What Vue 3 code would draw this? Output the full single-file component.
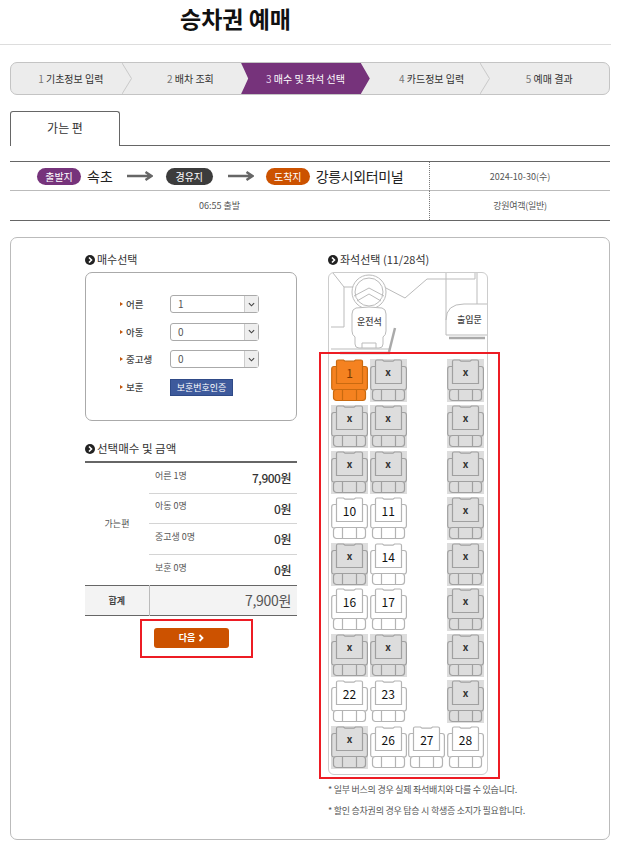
<script setup>
const steps = [
  { no: 1, label: '기초정보 입력' },
  { no: 2, label: '배차 조회' },
  { no: 3, label: '매수 및 좌석 선택', active: true },
  { no: 4, label: '카드정보 입력' },
  { no: 5, label: '예매 결과' }
]

const counts = [
  { label: '어른', value: 1 },
  { label: '아동', value: 0 },
  { label: '중고생', value: 0 }
]

const fares = [
  { label: '어른 1명', price: '7,900원' },
  { label: '아동 0명', price: '0원' },
  { label: '중고생 0명', price: '0원' },
  { label: '보훈 0명', price: '0원' }
]

// null = aisle, 'x' = taken, number = free seat
const seatRows = [
  [1, 'x', null, 'x'],
  ['x', 'x', null, 'x'],
  ['x', 'x', null, 'x'],
  [10, 11, null, 'x'],
  ['x', 14, null, 'x'],
  [16, 17, null, 'x'],
  ['x', 'x', null, 'x'],
  [22, 23, null, 'x'],
  ['x', 26, 27, 28]
]
const seats = seatRows.flat()

function seatClass(seat) {
  if (seat === 'x') return 'taken'
  if (seat === 1) return 'picked'
  return 'free'
}
</script>

<template>
  <div class="page">
    <h1 class="title">승차권 예매</h1>

    <div class="content">
      <ol class="steps">
        <li v-for="s in steps" :key="s.no" class="step" :class="{ active: s.active }">
          <span><em>{{ s.no }}</em> {{ s.label }}</span>
          <svg v-if="!s.active && s.no < 5" class="step-sep" viewBox="0 0 10 33" preserveAspectRatio="none">
            <path d="M0 0L9.5 16.5L0 33" fill="#ececec" stroke="#c8c8c8" />
          </svg>
        </li>
      </ol>

      <div class="tabs">
        <div class="tab">가는 편</div>
      </div>

      <div class="route">
        <div class="route-main">
          <span class="pill purple">출발지</span>
          <span class="place first">속초</span>
          <svg class="arrow" viewBox="0 0 26 10"><path d="M0 5H24M18.5 1L24.5 5L18.5 9" fill="none" stroke="#666" stroke-width="2.4" /></svg>
          <span class="pill dark">경유지</span>
          <svg class="arrow second" viewBox="0 0 26 10"><path d="M0 5H24M18.5 1L24.5 5L18.5 9" fill="none" stroke="#666" stroke-width="2.4" /></svg>
          <span class="pill orange">도착지</span>
          <span class="place">강릉시외터미널</span>
        </div>
        <div class="route-side">2024-10-30(수)</div>
        <div class="route-time">06:55 출발</div>
        <div class="route-side last">강원여객(일반)</div>
      </div>

      <div class="panel">
        <section class="left">
          <h2 class="heading small">
            <i class="bullet"><svg viewBox="0 0 10 10"><path d="M4 2.5L6.5 5L4 7.5" fill="none" stroke="#fff" stroke-width="1.6" /></svg></i>매수선택
          </h2>
          <div class="count-box">
            <div v-for="c in counts" :key="c.label" class="count-row">
              <span class="count-label">{{ c.label }}</span>
              <div class="select">
                <span class="select-value">{{ c.value }}</span>
                <span class="select-arrow"><svg viewBox="0 0 8 5"><path d="M1 1L4 4L7 1" fill="none" stroke="#444" stroke-width="1.3" /></svg></span>
              </div>
            </div>
            <div class="count-row">
              <span class="count-label">보훈</span>
              <button class="verify">보훈번호인증</button>
            </div>
          </div>

          <h2 class="heading fare-heading">
            <i class="bullet"><svg viewBox="0 0 10 10"><path d="M4 2.5L6.5 5L4 7.5" fill="none" stroke="#fff" stroke-width="1.6" /></svg></i>선택매수 및 금액
          </h2>
          <table class="fares">
            <tbody>
              <tr v-for="(f, i) in fares" :key="f.label">
                <th v-if="i === 0" rowspan="4" class="fare-way">가는편</th>
                <td class="fare-label">{{ f.label }}</td>
                <td class="fare-price">{{ f.price }}</td>
              </tr>
              <tr class="total">
                <th>합계</th>
                <td colspan="2">7,900원</td>
              </tr>
            </tbody>
          </table>
          <div class="next-box">
            <button class="next">다음 <svg viewBox="0 0 6 8"><path d="M1.5 1L4.5 4L1.5 7" fill="none" stroke="#fff" stroke-width="1.8" /></svg></button>
          </div>
        </section>

        <section class="right">
          <h2 class="heading small">
            <i class="bullet"><svg viewBox="0 0 10 10"><path d="M4 2.5L6.5 5L4 7.5" fill="none" stroke="#fff" stroke-width="1.6" /></svg></i>좌석선택 (11/28석)
          </h2>
          <div class="bus">
            <div class="cabin">
              <svg class="cabin-art" viewBox="0 0 158 86" fill="none" stroke="#bbb">
                <path d="M4 0L15 14V54H2" />
                <path d="M15 14H55L76 25L98 6H146V0" />
                <circle cx="40" cy="19" r="17" fill="#fff" />
                <circle cx="40" cy="19" r="14" />
                <path d="M25 23L40 15L55 23M28 28L40 21L52 28" />
                <path d="M27 35Q40 33 53 35Q57 36 57 41V58Q57 62 54 64V71Q54 75 50 75H30Q26 75 26 71V64Q23 62 23 58V41Q23 36 27 35Z" fill="#fff" />
                <path d="M33 75V70H47V75" />
                <path d="M2 76H60" />
                <path d="M66 55L60 79" stroke="#aaa" stroke-width="2.5" />
                <path d="M11 80H61" stroke="#aaa" stroke-width="2.5" />
                <path d="M117 0V62H158" />
                <path d="M148 0V31" />
                <path d="M117 47Q117 31 135 31H158" />
                <path d="M120 65H156" stroke="#aaa" stroke-width="2.5" />
              </svg>
              <span class="driver">운전석</span>
              <span class="door">출입문</span>
            </div>
            <div class="seats">
              <template v-for="(seat, i) in seats" :key="i">
                <div v-if="seat === null" class="aisle"></div>
                <div v-else class="seat" :class="seatClass(seat)">
                  <svg viewBox="0 0 37 43">
                    <path class="frame" d="M3 7.5H34Q36.4 7.5 36.4 10V28.5Q36.4 31 34 31H3Q.7 31 .7 28.5V10Q.7 7.5 3 7.5Z" />
                    <path class="frame" d="M5.5 24.5V2.5Q5.5 1 7 1H12.5L14 2.2H23L24.5 1H30Q31.5 1 31.5 2.5V24.5Z" />
                    <rect class="frame" x="2.5" y="30.5" width="32" height="11" rx="3" />
                    <path class="frame" d="M11.5 30.5V41.5M25.5 30.5V41.5" />
                  </svg>
                  <span class="seat-no">{{ seat }}</span>
                </div>
              </template>
            </div>
            <div class="seat-mark"></div>
          </div>
          <p class="note first-note">* 일부 버스의 경우 실제 좌석배치와 다를 수 있습니다.</p>
          <p class="note">* 할인 승차권의 경우 탑승 시 학생증 소지가 필요합니다.</p>
        </section>
      </div>
    </div>
  </div>
</template>

<style>
body {
  background: #fff;
}
</style>

<style scoped>
.page {
  width: 617px;
  height: 847px;
  overflow: hidden;
  font-family: "Noto Sans CJK KR", "Noto Sans", sans-serif;
  color: #333;
  box-sizing: border-box;
}

.title {
  margin: 0;
  width: 611px;
  height: 45px;
  box-sizing: border-box;
  border-bottom: 1px solid #ddd;
  padding: 2px 0 0 180px;
  font-size: 23px;
  line-height: 32px;
  font-weight: 700;
  color: #111;
}

.content {
  padding: 17px 7px 0 10px;
}

.steps {
  display: grid;
  grid-template-columns: repeat(5, 1fr);
  list-style: none;
  margin: 0;
  padding: 0;
  height: 33px;
  box-sizing: border-box;
  background: #ececec;
  border: 1px solid #c4c4c4;
  border-radius: 7px;
  font-size: 10px;
}

.step {
  position: relative;
  display: flex;
  align-items: center;
  justify-content: center;
  color: #333;
  white-space: nowrap;
}

.step em {
  font-style: normal;
  color: #777;
}

.step-sep {
  position: absolute;
  right: -1px;
  top: 0;
  width: 10px;
  height: 31px;
}

.step.active {
  z-index: 1;
  margin-left: -9px;
  background: #76337b;
  color: #fff;
  clip-path: polygon(0 0, calc(100% - 9px) 0, 100% 50%, calc(100% - 9px) 100%, 0 100%, 7px 50%);
}

.step.active em {
  color: #e6cfe8;
}

.step:nth-child(4) span {
  padding-left: 4px;
}

.tabs {
  margin-top: 16px;
  height: 34px;
  border-bottom: 1px solid #666;
}

.tab {
  width: 110px;
  height: 35px;
  box-sizing: border-box;
  background: #fff;
  border: 1px solid #666;
  border-bottom: none;
  border-radius: 3px 3px 0 0;
  text-align: center;
  line-height: 32px;
  font-size: 12px;
  color: #333;
}

.route {
  margin-top: 15px;
  display: grid;
  grid-template-columns: 419px 1fr;
  grid-template-rows: 29px 29px;
  border-top: 1px solid #666;
  border-bottom: 1px solid #666;
  font-size: 9px;
  color: #555;
}

.route-main {
  display: flex;
  align-items: center;
  padding-left: 27px;
  border-bottom: 1px solid #bbb;
}

.route-side {
  display: flex;
  align-items: center;
  justify-content: center;
  border-left: 1px dotted #777;
  border-bottom: 1px solid #bbb;
}

.route-side.last {
  border-bottom: none;
  letter-spacing: -0.3px;
}

.route-time {
  display: flex;
  align-items: center;
  justify-content: center;
}

.pill {
  width: 44px;
  height: 17px;
  border-radius: 9px;
  color: #fff;
  font-size: 10px;
  line-height: 17px;
  text-align: center;
  flex: none;
}

.pill.purple { background: #76337b; }
.pill.dark { width: 47px; margin-left: -1px; background: #3c3c3c; }
.pill.orange { background: #cc5200; }

.place {
  margin-left: 6px;
  font-size: 14px;
  letter-spacing: -0.4px;
  color: #222;
}

.place.first {
  margin-right: 14px;
  letter-spacing: 0;
}

.arrow {
  width: 26px;
  height: 10px;
  flex: none;
  margin-right: 14px;
}

.arrow.second {
  margin-left: 15px;
  margin-right: 12px;
}

.panel {
  position: relative;
  margin-top: 16px;
  height: 603px;
  box-sizing: border-box;
  border: 1px solid #bbb;
  border-radius: 7px;
  padding: 13px 0 0 74px;
  display: flex;
  gap: 31px;
}

.left {
  width: 212px;
}

.right {
  width: 161px;
}

.heading {
  display: flex;
  align-items: center;
  gap: 2px;
  margin: 0;
  height: 17px;
  font-size: 11.5px;
  line-height: 17px;
  font-weight: 400;
  color: #333;
  white-space: nowrap;
}

.heading.small {
  font-size: 11px;
}

.bullet {
  display: block;
  width: 10px;
  height: 10px;
  border-radius: 50%;
  background: #222;
  flex: none;
}

.bullet svg {
  display: block;
  width: 10px;
  height: 10px;
}

.count-box {
  margin-top: 4px;
  height: 149px;
  box-sizing: border-box;
  border: 1px solid #aaa;
  border-radius: 7px;
  padding: 22px 0 0 34px;
  display: flex;
  flex-direction: column;
  gap: 9.7px;
}

.count-row {
  display: flex;
  align-items: center;
  height: 18px;
}

.count-label {
  position: relative;
  width: 50px;
  padding-left: 6px;
  box-sizing: border-box;
  font-size: 9.5px;
  font-weight: 500;
  color: #444;
}

.count-label::before {
  content: "";
  position: absolute;
  left: 0;
  top: 50%;
  margin-top: -2px;
  border-left: 3px solid #c2560c;
  border-top: 2.5px solid transparent;
  border-bottom: 2.5px solid transparent;
}

.select {
  width: 89px;
  height: 18px;
  box-sizing: border-box;
  border: 1px solid #aaa;
  border-radius: 3px;
  display: flex;
  font-size: 10px;
  color: #555;
}

.select-value {
  flex: 1;
  padding-left: 7px;
  line-height: 16px;
}

.select-arrow {
  width: 13px;
  background: #eee;
  border-left: 1px solid #ccc;
  display: flex;
  align-items: center;
  justify-content: center;
}

.select-arrow svg {
  width: 7px;
  height: 5px;
}

.verify {
  width: 63px;
  height: 17px;
  padding: 0;
  border: 1px solid #2f4a87;
  background: #3e5a9c;
  color: #fff;
  font-family: inherit;
  font-size: 9px;
  line-height: 15px;
}

.fare-heading {
  margin-top: 19px;
}

.fares {
  width: 100%;
  margin-top: 4px;
  border-collapse: collapse;
  border-top: 2px solid #666;
  border-bottom: 1px solid #666;
  table-layout: fixed;
}

.fares tr {
  height: 31px;
}

.fares tr:nth-child(2) {
  height: 30px;
}

.fares th,
.fares td {
  padding: 0;
  font-weight: 400;
}

.fare-way {
  width: 64px;
  font-size: 9px;
  color: #555;
}

.fare-label {
  width: 68px;
  padding-left: 6px !important;
  padding-bottom: 5px !important;
  font-size: 9px;
  color: #555;
  border-bottom: 1px solid #d4d4d4;
  white-space: nowrap;
}

.fare-price {
  text-align: right;
  padding-right: 6px !important;
  font-size: 12px;
  letter-spacing: -0.5px;
  font-weight: 500 !important;
  color: #333;
  border-bottom: 1px solid #d4d4d4;
}

.fares tr:nth-child(4) td {
  border-bottom: none;
}

.total {
  background: #f3f3f3;
  border-top: 1px solid #666;
}

.fares .total {
  height: 30px;
}

.total th {
  font-size: 9px;
  font-weight: 700;
  color: #444;
  border-right: 1px solid #bbb;
}

.total td {
  text-align: right;
  padding-right: 6px !important;
  font-size: 14px;
  letter-spacing: -0.3px;
  color: #555;
}

.next-box {
  width: 113px;
  height: 39px;
  box-sizing: border-box;
  margin: 3px 0 0 55px;
  border: 2px solid #ed1c24;
  padding: 7px 0 0 12px;
}

.next {
  display: flex;
  align-items: center;
  justify-content: center;
  gap: 3px;
  width: 75px;
  height: 20px;
  padding: 0;
  border: none;
  border-radius: 3px;
  background: #cc5200;
  color: #fff;
  font-family: inherit;
  font-size: 9px;
  font-weight: 700;
}

.next svg {
  width: 6px;
  height: 8px;
}

.bus {
  position: relative;
  margin-top: 4px;
  width: 160px;
  height: 503px;
  box-sizing: border-box;
  border: 1px solid #ccc;
  border-radius: 6px;
}

.cabin {
  position: relative;
  height: 86px;
}

.cabin-art {
  display: block;
  width: 158px;
  height: 86px;
}

.driver,
.door {
  position: absolute;
  font-size: 9px;
  font-weight: 500;
  color: #444;
  line-height: 12px;
}

.driver { left: 28px; top: 43px; }
.door { left: 128px; top: 41px; }

.seats {
  display: grid;
  grid-template-columns: repeat(4, 37px);
  grid-auto-rows: 43px;
  column-gap: 1.67px;
  row-gap: 2.88px;
  padding-left: 2px;
}

.seat {
  position: relative;
}

.seat svg {
  display: block;
  width: 37px;
  height: 43px;
}

.frame {
  fill: #fff;
  stroke: #b4b4b4;
  stroke-width: 1.2;
}

.seat.taken { background: #ddd; }
.seat.taken .frame {
  fill: #ddd;
  stroke: #a0a0a0;
}

.seat.picked .frame {
  fill: #f58220;
  stroke: #c96a10;
}

.seat-no {
  position: absolute;
  left: 0;
  right: 0;
  top: 6px;
  text-align: center;
  font-size: 12px;
  line-height: 16px;
  color: #111;
}

.seat.taken .seat-no {
  font-size: 10px;
  font-weight: 700;
  top: 5px;
  color: #333;
}

.seat.picked .seat-no {
  color: #7a3a00;
}

.seat-mark {
  position: absolute;
  left: -10px;
  top: 79px;
  width: 181px;
  height: 427px;
  box-sizing: border-box;
  border: 2px solid #ed1c24;
  pointer-events: none;
}

.note {
  margin: 0;
  height: 20.5px;
  font-size: 9px;
  line-height: 21px;
  letter-spacing: -0.25px;
  color: #555;
  white-space: nowrap;
}

.first-note {
  margin-top: 4px;
}
</style>
